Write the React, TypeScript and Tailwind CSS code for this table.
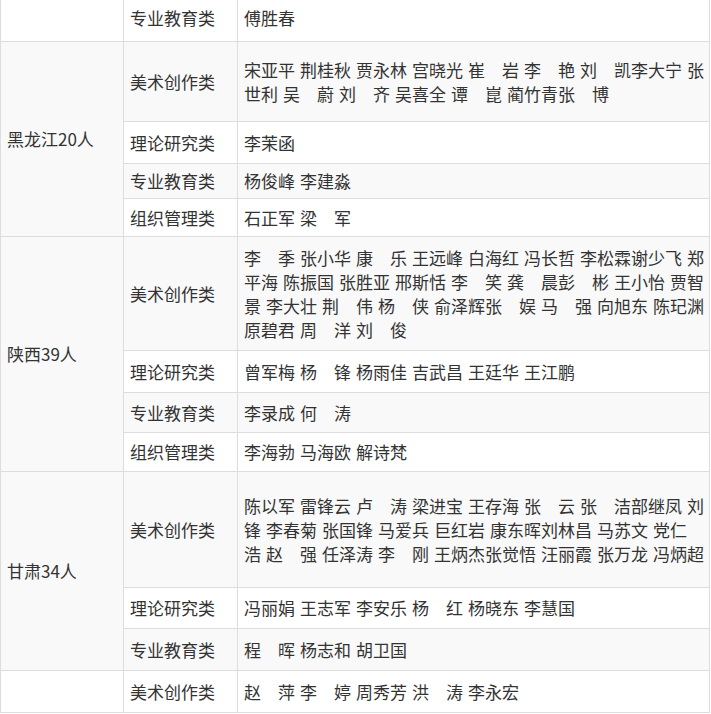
import React from "react";

type Row = { cat: string; lines: string[]; h: string; gray: boolean; extra?: string };

const G = "bg-[#f9f9f9]";

function Cat({ row }: { row: Row }) {
  return (
    <div
      className={`${row.h} ${row.gray ? G : "bg-white"} ${row.extra ?? ""} border-r border-b border-[#dddddd] pl-[6px] flex items-center`}
    >
      {row.cat}
    </div>
  );
}

function Names({ row }: { row: Row }) {
  return (
    <div
      className={`${row.h} ${row.gray ? G : "bg-white"} ${row.extra ?? ""} border-r border-b border-[#dddddd] pl-[6px] flex flex-col justify-center [word-spacing:1.2px]`}
    >
      {row.lines.map((l, i) => (
        <div key={i} className="whitespace-nowrap">
          {l}
        </div>
      ))}
    </div>
  );
}

function Prov({ name, span, gray }: { name: string; span: string; gray: boolean }) {
  return (
    <div
      className={`${span} ${gray ? G : "bg-white"} border-l border-r border-b border-[#dddddd] pl-[6px] flex items-center`}
    >
      {name}
    </div>
  );
}

export default function App() {
  const r0: Row = { cat: "专业教育类", lines: ["傅胜春"], h: "h-[42px]", gray: false, extra: "pb-[5px]" };
  const hlj: Row[] = [
    {
      cat: "美术创作类",
      lines: [
        "宋亚平 荆桂秋 贾永林 宫晓光 崔　岩 李　艳 刘　凯李大宁 张",
        "世利 吴　蔚 刘　齐 吴喜全 谭　崑 蔺竹青张　博",
      ],
      h: "h-[80px]",
      gray: true,
    },
    { cat: "理论研究类", lines: ["李茉函"], h: "h-[42px]", gray: false },
    { cat: "专业教育类", lines: ["杨俊峰 李建淼"], h: "h-[35px]", gray: true },
    { cat: "组织管理类", lines: ["石正军 梁　军"], h: "h-[38px]", gray: false },
  ];
  const sx: Row[] = [
    {
      cat: "美术创作类",
      lines: [
        "李　季 张小华 康　乐 王远峰 白海红 冯长哲 李松霖谢少飞 郑",
        "平海 陈振国 张胜亚 邢斯恬 李　笑 龚　晨彭　彬 王小怡 贾智",
        "景 李大壮 荆　伟 杨　侠 俞泽辉张　娱 马　强 向旭东 陈玘渊",
        "原碧君 周　洋 刘　俊",
      ],
      h: "h-[114px]",
      gray: true,
    },
    { cat: "理论研究类", lines: ["曾军梅 杨　锋 杨雨佳 吉武昌 王廷华 王江鹏"], h: "h-[42px]", gray: false },
    { cat: "专业教育类", lines: ["李录成 何　涛"], h: "h-[40px]", gray: true },
    { cat: "组织管理类", lines: ["李海勃 马海欧 解诗梵"], h: "h-[39px]", gray: false },
  ];
  const gs: Row[] = [
    {
      cat: "美术创作类",
      lines: [
        "陈以军 雷锋云 卢　涛 梁进宝 王存海 张　云 张　洁部继凤 刘",
        "锋 李春菊 张国锋 马爱兵 巨红岩 康东晖刘林昌 马苏文 党仁",
        "浩 赵　强 任泽涛 李　刚 王炳杰张觉悟 汪丽霞 张万龙 冯炳超",
      ],
      h: "h-[116px]",
      gray: true,
    },
    { cat: "理论研究类", lines: ["冯丽娟 王志军 李安乐 杨　红 杨晓东 李慧国"], h: "h-[41px]", gray: false },
    { cat: "专业教育类", lines: ["程　晖 杨志和 胡卫国"], h: "h-[42px]", gray: true },
  ];
  const last: Row = { cat: "美术创作类", lines: ["赵　萍 李　婷 周秀芳 洪　涛 李永宏"], h: "h-[42px]", gray: false };

  return (
    <div className="w-[711px] h-[714px] overflow-hidden bg-white text-[17px] leading-[24px] text-[#333333] font-['Noto_Sans_CJK_SC','Noto_Sans',sans-serif]">
      <div className="grid grid-cols-[124px_114px_472px]">
        <Prov name="" span="row-span-1" gray={false} />
        <Cat row={r0} />
        <Names row={r0} />

        <Prov name="黑龙江20人" span="row-span-4" gray={true} />
        {hlj.map((r, i) => (
          <React.Fragment key={"h" + i}>
            <Cat row={r} />
            <Names row={r} />
          </React.Fragment>
        ))}

        <Prov name="陕西39人" span="row-span-4" gray={true} />
        {sx.map((r, i) => (
          <React.Fragment key={"s" + i}>
            <Cat row={r} />
            <Names row={r} />
          </React.Fragment>
        ))}

        <Prov name="甘肃34人" span="row-span-3" gray={true} />
        {gs.map((r, i) => (
          <React.Fragment key={"g" + i}>
            <Cat row={r} />
            <Names row={r} />
          </React.Fragment>
        ))}

        <Prov name="" span="row-span-1" gray={false} />
        <Cat row={last} />
        <Names row={last} />
      </div>
    </div>
  );
}
